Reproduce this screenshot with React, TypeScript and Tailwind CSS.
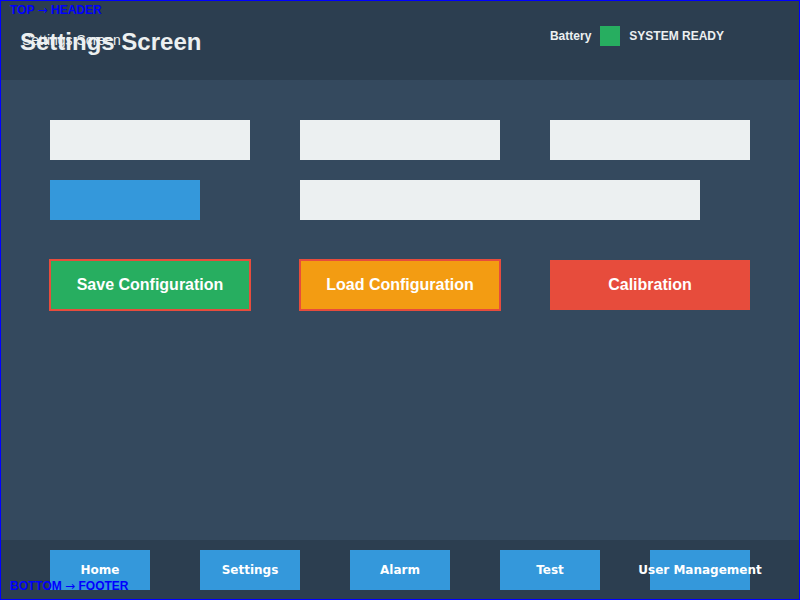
const navItems = ["Home", "Settings", "Alarm", "Test", "User Management"];

const App: React.FC = () => {
	return (
		<div className="relative w-[800px] h-[600px] flex flex-col bg-[#34495e] font-['Liberation_Sans',Arial,sans-serif] text-[#ecf0f1]">
			{/* header */}
			<header className="relative h-[80px] flex items-center bg-[#2c3e50]">
				<div className="relative pl-[20px]">
					<h1 className="text-[24px] leading-none font-bold mt-[4px]">
						Settings Screen
					</h1>
					<span className="absolute left-[22px] top-[7px] text-[14px] leading-none whitespace-nowrap text-[#ecf0f1]">
						Settings Screen
					</span>
				</div>
				<div className="ml-auto mr-[76px] mb-[9px] flex items-center gap-[9px] text-[12px] font-bold">
					<span>Battery</span>
					<div className="w-[20px] h-[20px] bg-[#27ae60]" />
					<span>SYSTEM READY</span>
				</div>
			</header>

			{/* main */}
			<main className="flex-1 pt-[40px] px-[50px]">
				<div className="flex gap-[50px]">
					<div className="w-[200px] h-[40px] bg-[#ecf0f1]" />
					<div className="w-[200px] h-[40px] bg-[#ecf0f1]" />
					<div className="w-[200px] h-[40px] bg-[#ecf0f1]" />
				</div>
				<div className="flex gap-[100px] mt-[20px]">
					<div className="w-[150px] h-[40px] bg-[#3498db]" />
					<div className="w-[400px] h-[40px] bg-[#ecf0f1]" />
				</div>
				<div className="flex items-center gap-[50px] mt-[40px] h-[50px] text-[16px] font-bold text-white">
					<button className="w-[202px] h-[52px] -mx-[1px] bg-[#27ae60] border-2 border-[#e74c3c]">
						Save Configuration
					</button>
					<button className="w-[202px] h-[52px] -mx-[1px] bg-[#f39c12] border-2 border-[#e74c3c]">
						Load Configuration
					</button>
					<button className="w-[200px] h-[50px] bg-[#e74c3c]">
						Calibration
					</button>
				</div>
			</main>

			{/* footer */}
			<footer className="h-[60px] flex gap-[50px] px-[50px] pt-[10px] bg-[#2c3e50]">
				{navItems.map((item) => (
					<button
						key={item}
						className="w-[100px] h-[40px] flex items-center justify-center bg-[#3498db] text-white text-[12px] font-bold whitespace-nowrap font-['DejaVu_Sans',sans-serif]"
					>
						{item}
					</button>
				))}
			</footer>

			{/* debug labels */}
			<span className="absolute left-[10px] top-[4px] text-[12px] leading-none font-bold text-[#0000ff]">
				TOP <span className="font-['DejaVu_Sans',sans-serif] font-normal">→</span> HEADER
			</span>
			<span className="absolute left-[10px] top-[580px] text-[12px] leading-none font-bold text-[#0000ff]">
				BOTTOM <span className="font-['DejaVu_Sans',sans-serif] font-normal">→</span> FOOTER
			</span>
			<div className="absolute inset-0 border border-[#0000ff] pointer-events-none" />
		</div>
	);
};

export default App;
